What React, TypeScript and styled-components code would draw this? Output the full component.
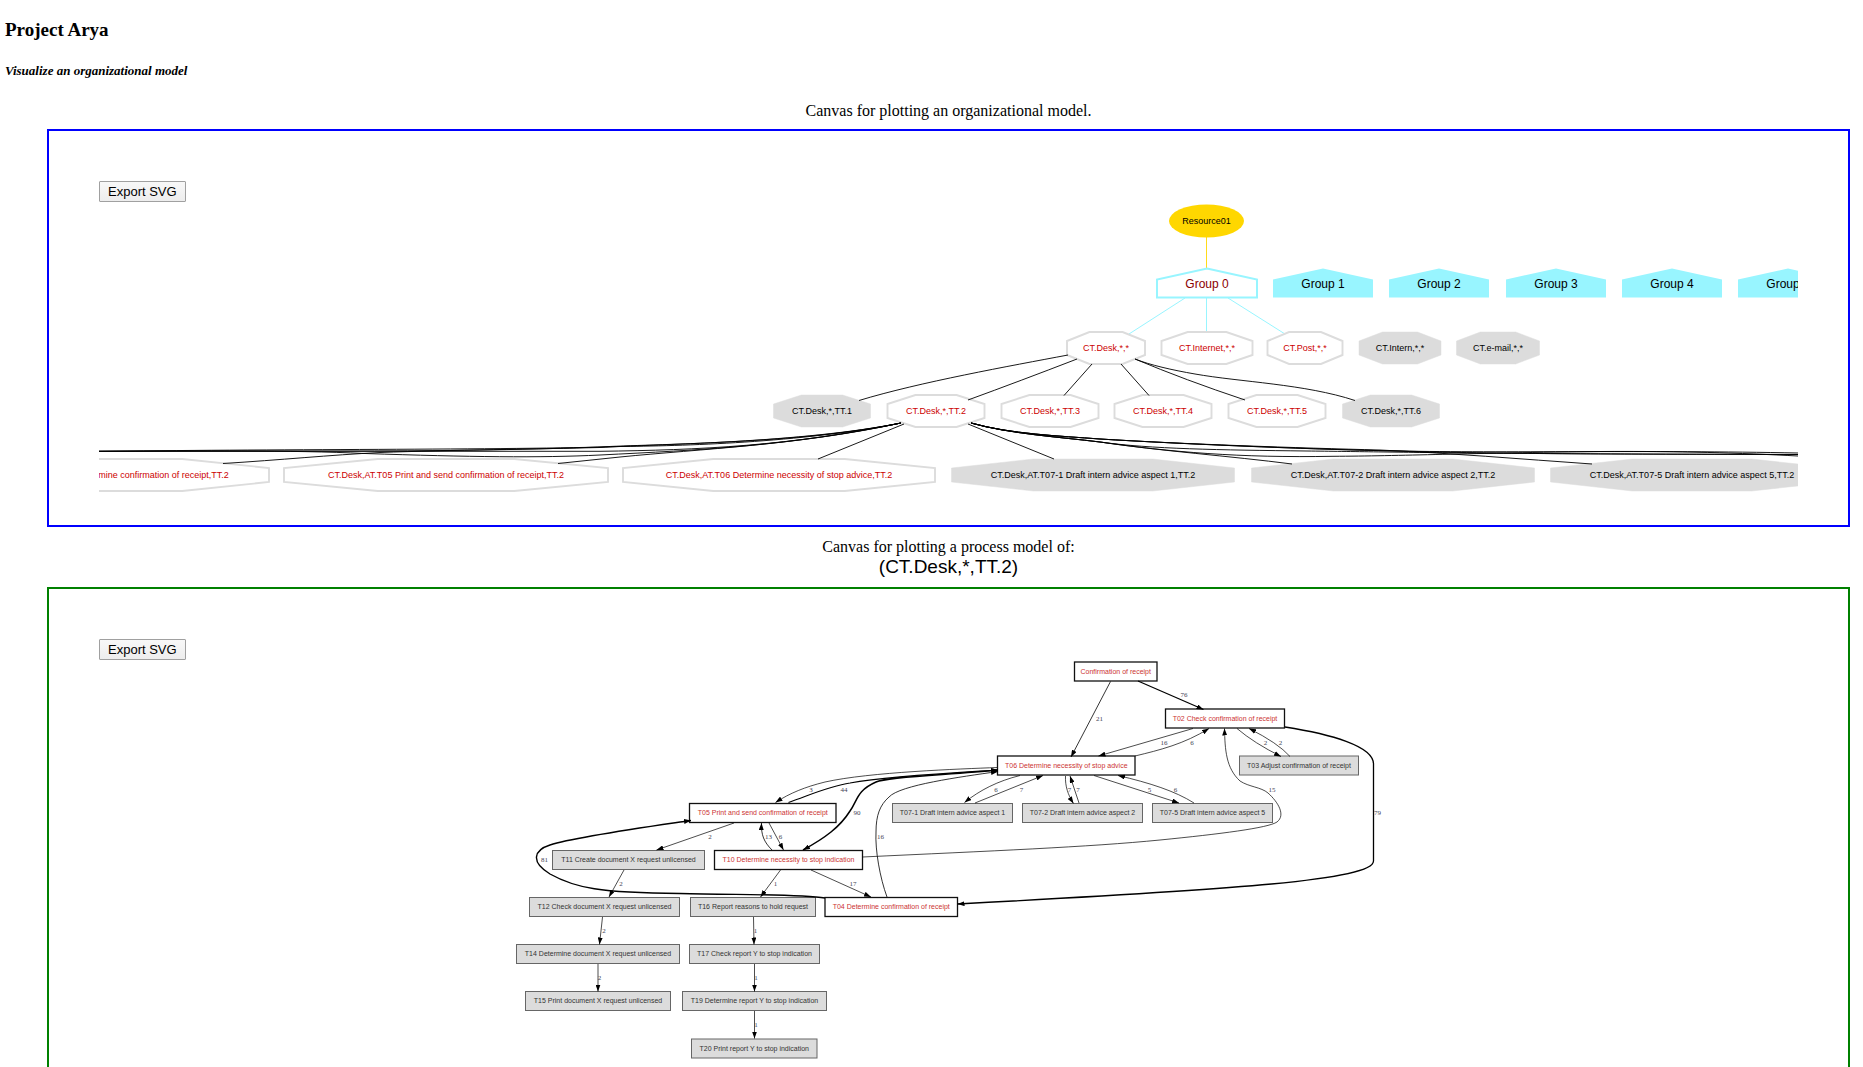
import React from "react";
import styled, { createGlobalStyle } from "styled-components";

const GlobalStyle = createGlobalStyle`
  body {
    margin: 0;
    background: #ffffff;
    color: #000000;
    font-family: "Liberation Serif", "Times New Roman", serif;
    font-size: 16px;
  }
`;

const Page = styled.main`
  padding: 19px 13px 0 5px;
`;

const Title = styled.h3`
  margin: 0;
  font-size: 19px;
  line-height: 22px;
`;

const Subtitle = styled.h5`
  margin: 22px 0 0;
  font-size: 13px;
  line-height: 16px;
  font-style: italic;
`;

const Plot = styled.figure<{ $gap: number }>`
  margin: ${(p) => p.$gap}px 0 0 42px;
`;

const Caption = styled.figcaption`
  padding-bottom: 9px;
  text-align: center;
  line-height: 18px;
`;

const SelectedGroup = styled.div`
  font-family: "Liberation Sans", Arial, sans-serif;
  font-size: 19px;
  line-height: 22px;
`;

const Canvas = styled.div<{ $border: string }>`
  display: flex;
  flex-direction: column;
  align-items: flex-start;
  padding: 50px 50px 25px;
  border: 2px solid ${(p) => p.$border};
`;

const ExportButton = styled.button`
  height: 21px;
  padding: 0 8px;
  border: 1px solid #a0a0a0;
  border-radius: 1px;
  background: linear-gradient(#f8f8f8, #ededed);
  color: #000000;
  font-family: "Liberation Sans", Arial, sans-serif;
  font-size: 13px;
  line-height: 19px;
`;

const Drawing = styled.svg<{ $height: number }>`
  display: block;
  width: 100%;
  height: ${(p) => p.$height}px;
  overflow: hidden;
`;

const NodeText = styled.text<{ $size: number }>`
  font-family: "Liberation Sans", Arial, sans-serif;
  font-size: ${(p) => p.$size}px;
  text-anchor: middle;
`;

const WeightText = styled.text`
  font-family: "Liberation Serif", "Times New Roman", serif;
  font-size: 7px;
  text-anchor: middle;
  fill: #444455;
`;

/* ---------- organizational model ---------- */

type ModeNode = { x: number; y: number; w: number; label: string; active?: boolean };

const groups = [
  { x: 1207, label: "Group 0", active: true },
  { x: 1323, label: "Group 1" },
  { x: 1439, label: "Group 2" },
  { x: 1556, label: "Group 3" },
  { x: 1672, label: "Group 4" },
  { x: 1788, label: "Group 5" },
];

const modes: ModeNode[] = [
  { x: 1106, y: 348, w: 79, label: "CT.Desk,*,*", active: true },
  { x: 1207, y: 348, w: 92, label: "CT.Internet,*,*", active: true },
  { x: 1305, y: 348, w: 76, label: "CT.Post,*,*", active: true },
  { x: 1400, y: 348, w: 83, label: "CT.Intern,*,*" },
  { x: 1498, y: 348, w: 84, label: "CT.e-mail,*,*" },
  { x: 822, y: 411, w: 98, label: "CT.Desk,*,TT.1" },
  { x: 936, y: 411, w: 98, label: "CT.Desk,*,TT.2", active: true },
  { x: 1050, y: 411, w: 98, label: "CT.Desk,*,TT.3", active: true },
  { x: 1163, y: 411, w: 98, label: "CT.Desk,*,TT.4", active: true },
  { x: 1277, y: 411, w: 98, label: "CT.Desk,*,TT.5", active: true },
  { x: 1391, y: 411, w: 98, label: "CT.Desk,*,TT.6" },
  { x: 119, y: 475, w: 301, label: "CT.Desk,AT.T04 Determine confirmation of receipt,TT.2", active: true },
  { x: 446, y: 475, w: 325, label: "CT.Desk,AT.T05 Print and send confirmation of receipt,TT.2", active: true },
  { x: 779, y: 475, w: 313, label: "CT.Desk,AT.T06 Determine necessity of stop advice,TT.2", active: true },
  { x: 1093, y: 475, w: 284, label: "CT.Desk,AT.T07-1 Draft intern advice aspect 1,TT.2" },
  { x: 1393, y: 475, w: 284, label: "CT.Desk,AT.T07-2 Draft intern advice aspect 2,TT.2" },
  { x: 1692, y: 475, w: 284, label: "CT.Desk,AT.T07-5 Draft intern advice aspect 5,TT.2" },
];

const groupEdges = [
  "M1185 298L1129 334",
  "M1206.5 298V332",
  "M1228 298L1285 334",
];

const modeEdges = [
  "M1068 355C1010 366 920 382 859 400.5",
  "M1077 359Q1020 381 968 400",
  "M1092 364L1064 395.5",
  "M1121 364L1149 395.5",
  "M1135 359Q1185 380 1245 400",
  "M1135 359C1150 365 1172 370 1195 374C1240 382 1305 384 1355 400.5",
  "M904 424L818 459",
  "M968 424L1054 459",
  "M901 423C800 444 650 444 600 447C520 450 430 451 341 451H98",
  "M901 423C800 443 680 446 618 446.5C520 450 250 449 98 451.5",
  "M901 423C800 443 660 444 600 447.5C540 449 450 450 380 452.5C330 455 280 460 223 463.5",
  "M901 423C790 446 700 450 600 451.3H98",
  "M901 423C790 446 700 450 600 455C540 458 470 457 365 453.5C290 450 200 451 98 451.5",
  "M901 423C800 445 700 449 620 457L558 463.5",
  "M971 423C1010 434 1060 436 1100 439C1180 444 1330 450 1400 451C1500 453 1650 450 1798 453",
  "M971 423C1010 434 1060 436 1100 439C1180 444 1300 448 1380 450C1450 453 1520 459 1592 464",
  "M971 423C1010 434 1060 436 1100 439C1200 445 1330 450 1400 451C1500 454 1600 454 1798 454.5",
  "M971 423C1010 434 1060 437 1100 442C1150 449 1220 450 1307 451C1400 452 1480 454 1798 454.5",
  "M971 423C1010 434 1060 437 1100 442C1170 452 1240 458 1333 456.3C1400 456 1470 453 1600 451.5C1680 451 1740 453 1798 456",
  "M971 423C1010 434 1060 437 1100 442C1160 451 1230 456 1292 464",
];

function housePoints(x: number) {
  return `${x},268.5 ${x + 50},279.5 ${x + 50},297.5 ${x - 50},297.5 ${x - 50},279.5`;
}

function octagonPoints({ x, y, w }: ModeNode) {
  const outer = w / 2 - 0.5;
  const inner = w * 0.21;
  return [
    [x - inner, y - 16], [x + inner, y - 16], [x + outer, y - 7], [x + outer, y + 7],
    [x + inner, y + 16], [x - inner, y + 16], [x - outer, y + 7], [x - outer, y - 7],
  ].map((p) => p.join(",")).join(" ");
}

function OrganizationalModel() {
  return (
    <Drawing $height={298} role="img" aria-label="Organizational model">
      <g transform="translate(-99 -202)">
        <path d="M1206.5 237V269" stroke="#ffd700" strokeWidth="0.9" fill="none" />
        <ellipse cx="1206.5" cy="221" rx="37.5" ry="16.5" fill="#ffd700" />
        <NodeText $size={9} x="1206.5" y="224">Resource01</NodeText>
        {groupEdges.map((d) => <path key={d} d={d} fill="none" stroke="#98f5ff" />)}
        {groups.map((g) => (
          <g key={g.label}>
            <polygon points={housePoints(g.x)} fill={g.active ? "#ffffff" : "#98f5ff"} stroke="#98f5ff" strokeWidth={g.active ? 2 : 0} />
            <NodeText $size={12} x={g.x} y="288" fill={g.active ? "#8b0000" : "#000000"}>{g.label}</NodeText>
          </g>
        ))}
        {modes.map((m) => (
          <g key={m.label}>
            <polygon points={octagonPoints(m)} fill={m.active ? "#ffffff" : "#dcdcdc"} stroke="#dcdcdc" strokeWidth={m.active ? 1.9 : 0.5} />
            <NodeText $size={9} x={m.x} y={m.y + 3} fill={m.active ? "#cc0000" : "#000000"}>{m.label}</NodeText>
          </g>
        ))}
        {modeEdges.map((d) => <path key={d} d={d} fill="none" stroke="#000000" strokeWidth="0.9" />)}
      </g>
    </Drawing>
  );
}

/* ---------- process model ---------- */

type Activity = { left: number; right: number; y: number; label: string; active?: boolean };

const activities: Activity[] = [
  { left: 1074.5, right: 1157, y: 671.5, label: "Confirmation of receipt", active: true },
  { left: 1165.5, right: 1284.5, y: 718.5, label: "T02 Check confirmation of receipt", active: true },
  { left: 997.5, right: 1135, y: 765.5, label: "T06 Determine necessity of stop advice", active: true },
  { left: 1239.5, right: 1358.5, y: 765.5, label: "T03 Adjust confirmation of receipt" },
  { left: 689.5, right: 836, y: 813, label: "T05 Print and send confirmation of receipt", active: true },
  { left: 892.5, right: 1012.5, y: 813, label: "T07-1 Draft intern advice aspect 1" },
  { left: 1022.5, right: 1142.5, y: 813, label: "T07-2 Draft intern advice aspect 2" },
  { left: 1152.5, right: 1272.5, y: 813, label: "T07-5 Draft intern advice aspect 5" },
  { left: 552.5, right: 704.5, y: 860, label: "T11 Create document X request unlicensed" },
  { left: 714.5, right: 862.5, y: 860, label: "T10 Determine necessity to stop indication", active: true },
  { left: 529.5, right: 679.5, y: 907, label: "T12 Check document X request unlicensed" },
  { left: 690.5, right: 815.5, y: 907, label: "T16 Report reasons to hold request" },
  { left: 825, right: 957.5, y: 907, label: "T04 Determine confirmation of receipt", active: true },
  { left: 516.5, right: 679.5, y: 954, label: "T14 Determine document X request unlicensed" },
  { left: 689.5, right: 819.5, y: 954, label: "T17 Check report Y to stop indication" },
  { left: 525.5, right: 670.5, y: 1001, label: "T15 Print document X request unlicensed" },
  { left: 682.5, right: 826.5, y: 1001, label: "T19 Determine report Y to stop indication" },
  { left: 691.5, right: 817, y: 1048.5, label: "T20 Print report Y to stop indication" },
];

type Flow = { d: string; n: string; x: number; y: number; width?: number; both?: boolean };

const flows: Flow[] = [
  { d: "M1110.5 681.5L1071 757", n: "21", x: 1099.5, y: 719, width: 0.8 },
  { d: "M1138 681L1203.5 709.5", n: "76", x: 1184, y: 695, width: 1.3 },
  { d: "M1193 728.5L1098.5 756", n: "16", x: 1164, y: 743 },
  { d: "M1135 756C1160 750 1184 744 1209 728.5", n: "6", x: 1192, y: 743 },
  { d: "M1237 728.5Q1254 743 1281 756.5", n: "2", x: 1265.5, y: 743 },
  { d: "M1290 756.5Q1278 743 1249 728.5", n: "2", x: 1280.5, y: 743 },
  { d: "M862.5 857C990 851 1090 847 1160 840C1220 834 1268 828 1277 822C1286 815 1278 802 1268 793C1261 787 1249 787 1240 781C1226 768 1225 750 1224.5 728.5", n: "15", x: 1272, y: 790 },
  { d: "M1285 727C1330 734 1373.5 746 1373.5 764V861C1373.5 880 1240 889 957.5 904", n: "79", x: 1377.5, y: 813, width: 1.3 },
  { d: "M997 767.5C960 769 870 772 825 782C805 787 790 793 775.5 802.5", n: "3", x: 811, y: 790 },
  { d: "M788.5 802.5C815 793 830 786 850 783C890 776 950 773 998 770", n: "44", x: 844, y: 790, width: 1.1 },
  { d: "M998 770C950 775 890 776 876 782C856 791 858 800 850 811C840 827 825 838 803 850", n: "90", x: 857, y: 813, width: 1.5, both: true },
  { d: "M887 897C880 878 875 850 876 832C876 815 880 805 889 797C900 785 960 777 998 771.5", n: "16", x: 880.5, y: 837, width: 0.8 },
  { d: "M1020 775.5C998 781 980 790 964.5 802.5", n: "6", x: 996, y: 790 },
  { d: "M975 803L1043 775.5", n: "7", x: 1021.5, y: 790 },
  { d: "M1065.5 776C1065 786 1068 795 1073.5 803.5", n: "7", x: 1069.5, y: 790 },
  { d: "M1079 803L1070 776", n: "7", x: 1078, y: 790 },
  { d: "M1094 775.5L1179 803", n: "5", x: 1149.5, y: 790 },
  { d: "M1194 803C1175 791 1150 783 1118 775.5", n: "6", x: 1175.5, y: 790 },
  { d: "M734 823L656.5 850", n: "2", x: 710, y: 837 },
  { d: "M772 850C764 842 761 835 761.5 823", n: "13", x: 768.5, y: 837, width: 0.8 },
  { d: "M769 823L783.5 850", n: "6", x: 780.5, y: 837 },
  { d: "M825 898C800 894 740 895 680 893.5C600 893 575 888 550 874C530 862 534 850 550 845C575 837 640 828 691 820.5", n: "81", x: 544.5, y: 860, width: 1.4 },
  { d: "M624 870L609 897", n: "2", x: 621, y: 884 },
  { d: "M780.5 870L760.5 897", n: "1", x: 775.5, y: 884 },
  { d: "M811 870L871 897", n: "17", x: 853, y: 884 },
  { d: "M602.5 917L599.5 944.5", n: "2", x: 604, y: 931 },
  { d: "M598 964V991.5", n: "2", x: 599.5, y: 978 },
  { d: "M753.5 917L754 944.5", n: "1", x: 755.5, y: 931 },
  { d: "M754.5 964V991.5", n: "1", x: 756, y: 978 },
  { d: "M754.5 1011V1038.5", n: "1", x: 756, y: 1025 },
];

function ProcessModel() {
  return (
    <Drawing $height={420} role="img" aria-label="Process model">
      <defs>
        <marker id="arrow" viewBox="0 0 7 5" refX="7" refY="2.5" markerWidth="7" markerHeight="5" markerUnits="userSpaceOnUse" orient="auto-start-reverse">
          <path d="M0 0L7 2.5L0 5Z" fill="#000000" />
        </marker>
      </defs>
      <g transform="translate(-99 -660)">
        {activities.map((a) => (
          <g key={a.label}>
            <rect x={a.left} y={a.y - 9.5} width={a.right - a.left} height="19" fill={a.active ? "#ffffff" : "#dcdcdc"} stroke={a.active ? "#111111" : "#666666"} strokeWidth={a.active ? 1.3 : 1} />
            <NodeText $size={7} x={(a.left + a.right) / 2} y={a.y + 2} fill={a.active ? "#cc3333" : "#333333"}>{a.label}</NodeText>
          </g>
        ))}
        {flows.map((f) => (
          <g key={f.d}>
            <path d={f.d} fill="none" stroke="#000000" strokeWidth={f.width ?? 0.7} markerEnd="url(#arrow)" markerStart={f.both ? "url(#arrow)" : undefined} />
            <WeightText x={f.x} y={f.y + 2}>{f.n}</WeightText>
          </g>
        ))}
      </g>
    </Drawing>
  );
}

export default function App() {
  return (
    <>
      <GlobalStyle />
      <Page>
        <Title>Project Arya</Title>
        <Subtitle>Visualize an organizational model</Subtitle>
        <Plot $gap={23}>
          <Caption>Canvas for plotting an organizational model.</Caption>
          <Canvas $border="#0000ff">
            <ExportButton type="button">Export SVG</ExportButton>
            <OrganizationalModel />
          </Canvas>
        </Plot>
        <Plot $gap={11}>
          <Caption>
            Canvas for plotting a process model of:
            <SelectedGroup>(CT.Desk,*,TT.2)</SelectedGroup>
          </Caption>
          <Canvas $border="#008000">
            <ExportButton type="button">Export SVG</ExportButton>
            <ProcessModel />
          </Canvas>
        </Plot>
      </Page>
    </>
  );
}
